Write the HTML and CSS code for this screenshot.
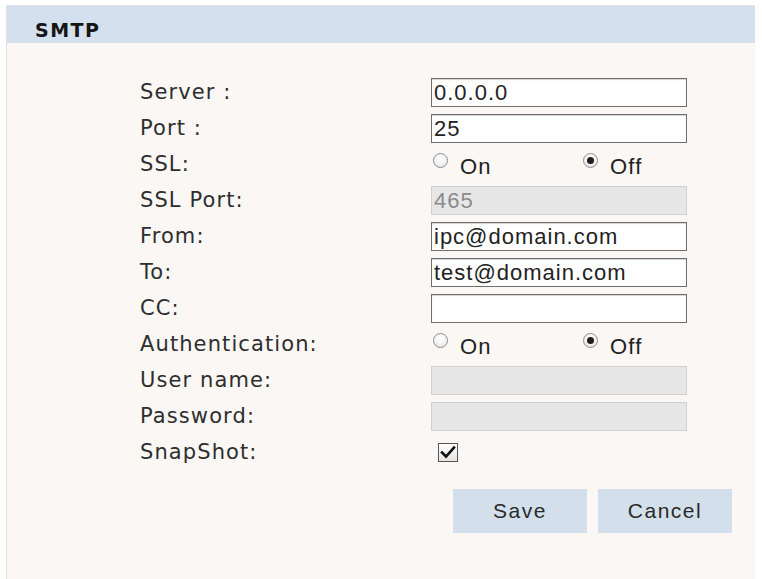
FILE: index.html
```html
<!DOCTYPE html>
<html>
<head>
<meta charset="utf-8">
<title>SMTP</title>
<link rel="stylesheet" href="styles.css">
</head>
<body>
<div class="panel">
  <div class="panel-head">SMTP</div>
  <div class="panel-body">
    <div class="form">
      <div class="label">Server :</div>
      <div class="ctrl"><div class="input">0.0.0.0</div></div>

      <div class="label">Port :</div>
      <div class="ctrl"><div class="input">25</div></div>

      <div class="label">SSL:</div>
      <div class="ctrl radios">
        <div class="opt"><span class="radio"></span><span class="opt-text">On</span></div>
        <div class="opt"><span class="radio checked"></span><span class="opt-text">Off</span></div>
      </div>

      <div class="label">SSL Port:</div>
      <div class="ctrl"><div class="input disabled">465</div></div>

      <div class="label">From:</div>
      <div class="ctrl"><div class="input">ipc@domain.com</div></div>

      <div class="label">To:</div>
      <div class="ctrl"><div class="input">test@domain.com</div></div>

      <div class="label">CC:</div>
      <div class="ctrl"><div class="input"></div></div>

      <div class="label">Authentication:</div>
      <div class="ctrl radios">
        <div class="opt"><span class="radio"></span><span class="opt-text">On</span></div>
        <div class="opt"><span class="radio checked"></span><span class="opt-text">Off</span></div>
      </div>

      <div class="label">User name:</div>
      <div class="ctrl"><div class="input disabled"></div></div>

      <div class="label">Password:</div>
      <div class="ctrl"><div class="input disabled"></div></div>

      <div class="label">SnapShot:</div>
      <div class="ctrl">
        <span class="checkbox">
          <svg width="16" height="14" viewBox="0 0 16 14"><path d="M2 7.5 L6 11.5 L14 2.5" fill="none" stroke="#111" stroke-width="2.6" stroke-linecap="square"/></svg>
        </span>
      </div>
    </div>
    <div class="buttons">
      <div class="btn">Save</div>
      <div class="btn">Cancel</div>
    </div>
  </div>
</div>
</body>
</html>
```
FILE: styles.css
```css
html, body {
  margin: 0;
  padding: 0;
  background: #ffffff;
}
body {
  width: 762px;
  height: 579px;
  overflow: hidden;
}
.panel {
  margin: 5px 0 0 6px;
  width: 749px;
  height: 574px;
  border-top: 1px solid #dfe3ea;
  border-left: 1px solid #e1e1e6;
  background: #faf7f5;
  box-sizing: border-box;
  display: flex;
  flex-direction: column;
}
.panel-head {
  height: 37px;
  box-sizing: border-box;
  padding: 11px 0 0 28px;
  background: #d4e0ed;
  font-family: "DejaVu Sans", sans-serif;
  font-weight: bold;
  font-size: 19px;
  letter-spacing: 1.5px;
  color: #151515;
  display: flex;
  align-items: center;
}
.panel-body {
  padding: 31px 0 0 133px;
}
.form {
  display: grid;
  grid-template-columns: 291px 256px;
  grid-auto-rows: 36px;
  align-items: center;
}
.label {
  font-family: "DejaVu Sans", sans-serif;
  font-size: 21px;
  letter-spacing: 1.1px;
  color: #2e2e2e;
  line-height: 24px;
}
.ctrl {
  height: 36px;
  display: flex;
  align-items: center;
}
.input {
  width: 256px;
  height: 29px;
  box-sizing: border-box;
  border: 1px solid #6e6e6e;
  box-shadow: inset 0 1px 1px rgba(0,0,0,0.18);
  background: #ffffff;
  padding: 0 0 0 2px;
  font-family: "Liberation Sans", Arial, sans-serif;
  font-size: 22px;
  letter-spacing: 1px;
  color: #222;
  line-height: 27px;
  white-space: nowrap;
  overflow: hidden;
}
.input.disabled {
  background: #e7e7e7;
  border-color: #d0d0d0;
  box-shadow: none;
  color: #8a8a8a;
}
.radios {
  align-items: flex-start;
}
.opt {
  width: 150px;
  flex-shrink: 0;
  display: flex;
  align-items: flex-start;
}
.opt:first-child {
  margin-left: 2px;
}
.radio {
  width: 15px;
  height: 15px;
  margin-top: 7px;
  box-sizing: border-box;
  border: 1px solid #8e8e8e;
  border-radius: 50%;
  background: radial-gradient(circle at 50% 35%, #ffffff 0%, #f0f0f0 60%, #d8d8d8 100%);
  display: flex;
  align-items: center;
  justify-content: center;
  flex-shrink: 0;
}
.radio.checked::after {
  content: "";
  width: 7px;
  height: 7px;
  border-radius: 50%;
  background: #1e1e1e;
}
.opt-text {
  margin: 11px 0 0 12px;
  font-family: "Liberation Sans", Arial, sans-serif;
  font-size: 22px;
  letter-spacing: 1.2px;
  line-height: 20px;
  color: #222;
}
.checkbox {
  margin-left: 7px;
  width: 20px;
  height: 19px;
  box-sizing: border-box;
  border: 1px solid #555;
  background: linear-gradient(#ffffff, #e4e4e4);
  display: flex;
  align-items: center;
  justify-content: center;
}
.buttons {
  display: flex;
  gap: 11px;
  margin: 19px 0 0 313px;
}
.btn {
  width: 134px;
  height: 44px;
  background: #d3e0ec;
  font-family: "Liberation Sans", Arial, sans-serif;
  font-size: 21px;
  letter-spacing: 1.5px;
  color: #2a2a2a;
  display: flex;
  align-items: center;
  justify-content: center;
}
```
